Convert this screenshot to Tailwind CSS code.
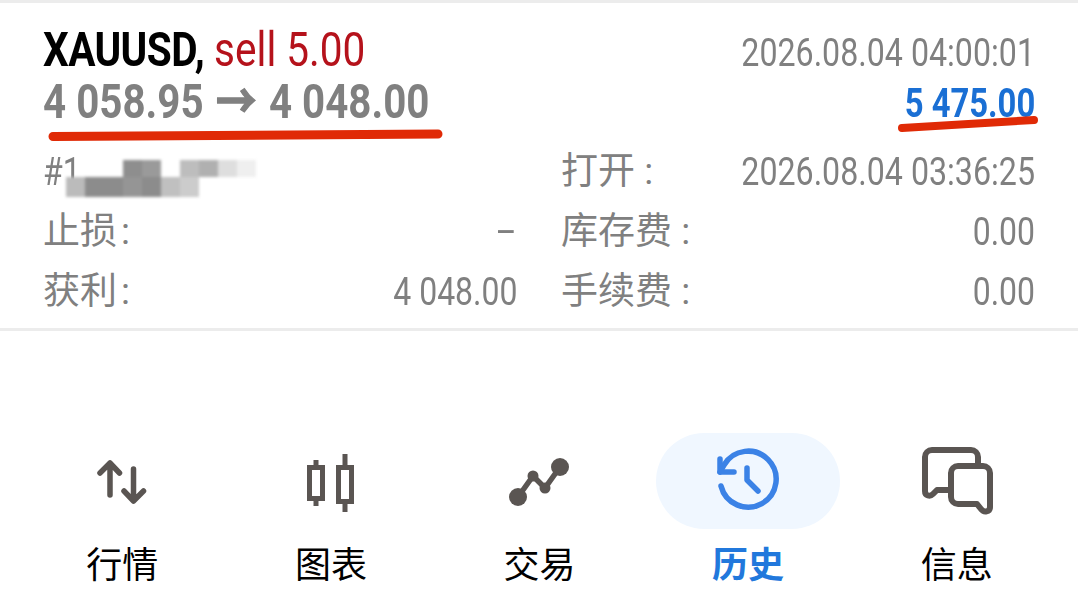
<!DOCTYPE html>
<html lang="zh">
<head>
  <meta charset="UTF-8" />
  <title>历史</title>
  <script src="https://cdn.jsdelivr.net/npm/@tailwindcss/browser@4"></script>
</head>
<body class="bg-white w-[1078px] h-[614px] overflow-hidden font-['Roboto','Noto_Sans_CJK_SC',sans-serif] text-[#808080]">
  <div class="relative border-y-[3px] border-[#ececec] h-[331px] px-[43px] pt-[21px]">
    <!-- header -->
    <div class="flex justify-between items-center h-[52px] whitespace-nowrap">
      <div class="origin-left scale-x-[0.845] text-[48px]"><span class="font-bold text-black tracking-[-0.7px]">XAUUSD,</span> <span class="text-[#b5121b]">sell 5.00</span></div>
      <div class="origin-right scale-x-[0.825] text-[39px] mt-[6px]">2026.08.04 04:00:01</div>
    </div>
    <div class="flex justify-between items-center h-[52px] whitespace-nowrap">
      <div class="origin-left scale-x-[0.84] text-[48px] font-bold">4 058.95 <span class="mx-[3px] [-webkit-text-stroke:1.5px_#808080]">→</span> 4 048.00</div>
      <div class="origin-right scale-x-[0.82] text-[40px] font-bold text-[#1a6fd4] mt-[4px]">5 475.00</div>
    </div>
    <!-- details -->
    <div class="grid grid-cols-2 gap-x-[44px] mt-[14px] text-[37px] whitespace-nowrap">
      <div class="flex justify-between items-center h-[60px]">
        <span class="origin-left scale-x-[0.82] text-[39px]">#1</span>
      </div>
      <div class="flex justify-between items-center h-[60px]">
        <span>打开 :</span>
        <span class="origin-right scale-x-[0.825] text-[39px]">2026.08.04 03:36:25</span>
      </div>
      <div class="flex justify-between items-center h-[60px]">
        <span>止损<span class="ml-[4px]">:</span></span>
        <span class="origin-right scale-x-[0.82] text-[39px]">–</span>
      </div>
      <div class="flex justify-between items-center h-[60px]">
        <span>库存费 :</span>
        <span class="origin-right scale-x-[0.82] text-[39px]">0.00</span>
      </div>
      <div class="flex justify-between items-center h-[60px]">
        <span>获利<span class="ml-[4px]">:</span></span>
        <span class="origin-right scale-x-[0.82] text-[39px]">4 048.00</span>
      </div>
      <div class="flex justify-between items-center h-[60px]">
        <span>手续费 :</span>
        <span class="origin-right scale-x-[0.82] text-[39px]">0.00</span>
      </div>
    </div>

    <!-- mosaic over the order number -->
    <div class="absolute left-[66px] top-[157px] w-[200px] h-[37px] blur-[1.5px]">
      <div class="flex h-[17px]">
        <div class="w-[19px]"></div>
        <div class="w-[38px] bg-white"></div>
        <div class="w-[19px] bg-[#8e8e8e]"></div>
        <div class="w-[19px] bg-[#9a9a9a]"></div>
        <div class="w-[19px] bg-white"></div>
        <div class="w-[19px] bg-[#bdbdbd]"></div>
        <div class="w-[19px] bg-[#b0b0b0]"></div>
        <div class="w-[19px] bg-[#dedede]"></div>
        <div class="w-[19px] bg-[#efefef]"></div>
      </div>
      <div class="flex h-[20px]">
        <div class="w-[19px] bg-[#bbbbbb]"></div>
        <div class="w-[38px] bg-[#8c8c8c]"></div>
        <div class="w-[19px] bg-[#959595]"></div>
        <div class="w-[19px] bg-[#8c8c8c]"></div>
        <div class="w-[19px] bg-[#c0c0c0]"></div>
        <div class="w-[19px] bg-[#cccccc]"></div>
      </div>
    </div>

    <!-- hand drawn red underlines -->
    <svg class="absolute left-0 -top-[3px]" width="1078" height="150" viewBox="0 0 1078 150">
      <path d="M53 136.5 L438 134" fill="none" stroke="#e02a06" stroke-width="9" stroke-linecap="round" />
      <path d="M902 128 L1034 120" fill="none" stroke="#e02a06" stroke-width="8" stroke-linecap="round" />
    </svg>
  </div>

  <!-- bottom nav -->
  <nav class="grid grid-cols-5 pl-[18px] pr-[17px] pt-[102px] text-[36px] text-black">
    <div class="flex flex-col items-center">
      <div class="w-[184px] h-[96px] flex items-center justify-center">
        <svg width="72" height="72" viewBox="86 444 72 72" fill="none" stroke="#5a5552" stroke-width="5.5" stroke-linecap="round" stroke-linejoin="round">
          <path d="M110 494V462M100 472L110 462L119.5 472" />
          <path d="M133.5 468V500M124 490L133.5 500L143.5 490" />
        </svg>
      </div>
      <span class="mt-[17px] leading-[40px]">行情</span>
    </div>
    <div class="flex flex-col items-center">
      <div class="w-[184px] h-[96px] flex items-center justify-center">
        <svg width="72" height="72" viewBox="295 444 72 72" fill="none" stroke="#5a5552" stroke-width="5">
          <rect x="309.5" y="466.5" width="13" height="31" />
          <path d="M316 459V466M316 498V505" />
          <rect x="338.5" y="466.5" width="13" height="34" />
          <path d="M345 453V466M345 501V511" />
        </svg>
      </div>
      <span class="mt-[17px] leading-[40px]">图表</span>
    </div>
    <div class="flex flex-col items-center">
      <div class="w-[184px] h-[96px] flex items-center justify-center">
        <svg width="72" height="72" viewBox="503 444 72 72" fill="#5a5552" stroke="none">
          <path d="M518 496L533 475L545 487L560 466" fill="none" stroke="#5a5552" stroke-width="5.5" stroke-linejoin="round" />
          <circle cx="518" cy="496" r="9" />
          <circle cx="533" cy="475" r="5.5" />
          <circle cx="545" cy="487" r="5.5" />
          <circle cx="560" cy="466" r="9" />
        </svg>
      </div>
      <span class="mt-[17px] leading-[40px]">交易</span>
    </div>
    <div class="flex flex-col items-center">
      <div class="w-[184px] h-[96px] flex items-center justify-center rounded-full bg-[#f0f7ff]">
        <svg width="72" height="72" viewBox="712 445 72 72" fill="none" stroke="#3b82e6" stroke-width="5.5" stroke-linecap="round" stroke-linejoin="round">
          <path d="M721 486A28 28 0 1 0 724 465L720 472" />
          <path d="M720 459V472H734" />
          <path d="M747 468V480L758 491" />
        </svg>
      </div>
      <span class="mt-[17px] leading-[40px] font-bold text-[#2178dc]">历史</span>
    </div>
    <div class="flex flex-col items-center">
      <div class="w-[184px] h-[96px] flex items-center justify-center">
        <svg width="76" height="76" viewBox="918 443 76 76" fill="none" stroke="#5a5552" stroke-width="6" stroke-linejoin="round" stroke-linecap="round">
          <path d="M977 465V457A7 7 0 0 0 970 450H931A7 7 0 0 0 924 457V491C924 496 929 497 932 494L936 490H950" />
          <path d="M957 466H982A7 7 0 0 1 989 473V507C989 512 983 513 980 509L976 504H957A7 7 0 0 1 950 497V473A7 7 0 0 1 957 466Z" />
        </svg>
      </div>
      <span class="mt-[17px] leading-[40px]">信息</span>
    </div>
  </nav>
</body>
</html>
